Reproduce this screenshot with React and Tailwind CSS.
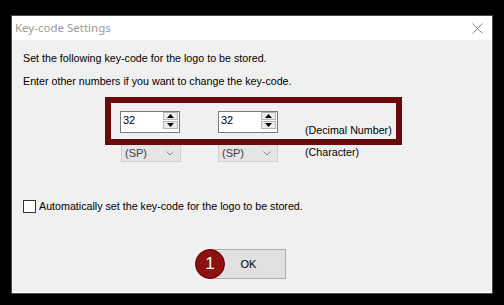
import React from "react";

function SpinButton({ up }) {
  return (
    <div className="flex h-[8px] w-[15px] items-center justify-center border border-[#b4b4b4] bg-[#ececec]">
      <svg width="7" height="4" viewBox="0 0 7 4">
        {up ? <path d="M0 4 L3.5 0 L7 4 Z" fill="#000" /> : <path d="M0 0 L3.5 4 L7 0 Z" fill="#000" />}
      </svg>
    </div>
  );
}

function Spinner() {
  return (
    <div className="flex h-[22px] w-[60px] border border-[#7a7a7a] bg-white">
      <span className="flex-1 pl-[2px] pt-[1px] text-[11px] leading-[14px]">32</span>
      <div className="flex flex-col gap-[1px] pr-[1px]">
        <SpinButton up />
        <SpinButton />
      </div>
    </div>
  );
}

function Combo() {
  return (
    <div className="flex h-[17px] w-[60px] items-center justify-between border-x border-b border-[#d0d0d0] bg-[#e5e5e5] pl-[3px] pr-[6px] text-[#404040]">
      <span className="text-[11px] leading-[14px]">(SP)</span>
      <svg width="8" height="5" viewBox="0 0 8 5">
        <path d="M0.5 0.5 L4 4 L7.5 0.5" fill="none" stroke="#888" strokeWidth="1" />
      </svg>
    </div>
  );
}

export default function App() {
  return (
    <div className="h-[305px] w-[504px] bg-black pl-[11px] pt-[15px] font-['Liberation_Sans',Arial,sans-serif]">
      <div className="flex h-[279px] w-[482px] flex-col border border-[#4a4a4a]">
        <div className="flex h-[24px] items-center justify-between bg-white pl-[3px] pr-[9px]">
          <span className="font-['Noto_Sans',sans-serif] text-[11.5px] text-[#9a9a9a]">Key-code Settings</span>
          <svg width="11" height="11" viewBox="0 0 11 11">
            <path d="M0.5 0.5 L10.5 10.5 M10.5 0.5 L0.5 10.5" stroke="#8a8a8a" strokeWidth="1" />
          </svg>
        </div>
        <div className="flex-1 border-b border-white bg-[#f0f0f0] pl-[11px] pt-[11px] text-[10.7px] leading-[14px] text-black">
          <p>Set the following key-code for the logo to be stored.</p>
          <p className="mt-[9px]">Enter other numbers if you want to change the key-code.</p>

          <div className="ml-[82px] mt-[9px] flex h-[48px] w-[297px] border-[6px] border-[#6a0a0a] pl-[9px] pt-[8px]">
            <Spinner />
            <div className="ml-[38px]">
              <Spinner />
            </div>
            <span className="ml-[27px] mt-[12px]">(Decimal Number)</span>
          </div>

          <div className="ml-[98px] flex h-[17px]">
            <Combo />
            <div className="ml-[37px]">
              <Combo />
            </div>
            <span className="ml-[27px]">(Character)</span>
          </div>

          <label className="mt-[37px] flex items-center gap-[3px]">
            <span className="h-[13px] w-[13px] border border-[#333] bg-white" />
            <span>Automatically set the key-code for the logo to be stored.</span>
          </label>

          <div className="relative ml-[188px] mt-[36px] flex h-[30px] w-[75px] items-center justify-center border border-[#adadad] bg-[#e1e1e1] text-[11px]">
            OK
            <span className="absolute left-[-17px] top-[-1px] flex h-[30px] w-[30px] items-center justify-center rounded-full border border-[#5a0505] bg-[#8e1010] text-[17px] text-white">
              1
            </span>
          </div>
        </div>
      </div>
    </div>
  );
}
